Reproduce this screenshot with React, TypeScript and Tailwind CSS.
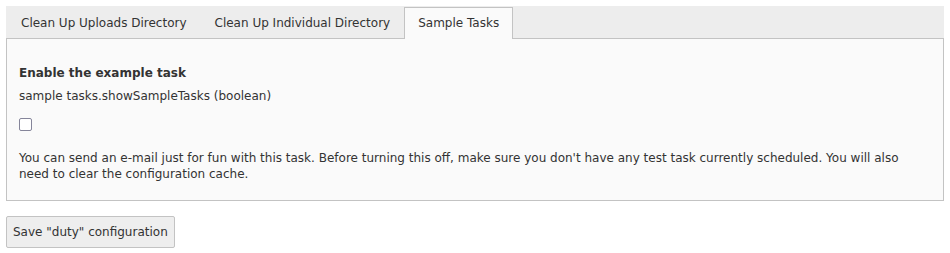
import React from "react";

const tabs = ["Clean Up Uploads Directory", "Clean Up Individual Directory", "Sample Tasks"];

export default function App() {
	const active = 2;
	return (
		<div className="w-[950px] h-[253px] bg-white p-[6px] text-[12px] text-[#333] font-['DejaVu_Sans',Verdana,sans-serif]">
			<div className="flex bg-[#ededed] border border-b-0 border-[#ededed] h-[32px]">
				{tabs.map((tab, index) => (
					<div
						key={index}
						className={
							index === active
								? "px-[13px] leading-[30px] bg-[#fafafa] border border-b-0 border-[#c3c3c3] relative -mb-px z-10"
								: "px-[13px] leading-[30px] border border-transparent"
						}
					>
						{tab}
					</div>
				))}
			</div>
			<div className="bg-[#fafafa] border border-[#c3c3c3] px-[12px] pt-[24px] pb-[18px]">
				<div className="font-bold leading-[20px]">Enable the example task</div>
				<div className="leading-[20px] mt-[3px]">sample tasks.showSampleTasks (boolean)</div>
				<div className="mt-[8px] h-[20px] flex items-center">
					<div className="w-[13px] h-[13px] border border-[#85859a] rounded-[2px] bg-white" />
				</div>
				<div className="mt-[16px] leading-[16px]">
					You can send an e-mail just for fun with this task. Before turning this off, make sure you don't have any test task currently scheduled. You will also need to clear the configuration cache.
				</div>
			</div>
			<button className="mt-[15px] h-[32px] px-[6px] bg-[#eeeeee] border border-[#c3c3c3] rounded-[2px] text-[#333] leading-[30px]">
				Save "duty" configuration
			</button>
		</div>
	);
}
